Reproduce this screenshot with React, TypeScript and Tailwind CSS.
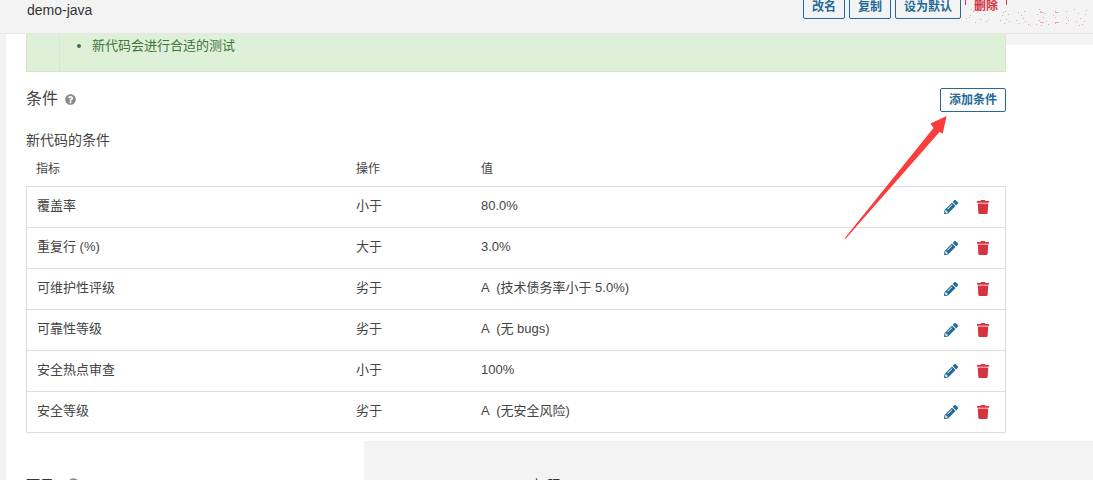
import { FaPencilAlt, FaQuestionCircle, FaTrash } from "react-icons/fa";

const rows = [
  { name: "覆盖率", op: "小于", value: "80.0%" },
  { name: "重复行 (%)", op: "大于", value: "3.0%" },
  { name: "可维护性评级", op: "劣于", value: "A  (技术债务率小于 5.0%)" },
  { name: "可靠性等级", op: "劣于", value: "A  (无 bugs)" },
  { name: "安全热点审查", op: "小于", value: "100%" },
  { name: "安全等级", op: "劣于", value: "A  (无安全风险)" },
];

// faint watermark specks over the header, in page pixels
const specks = [
  [966, 18], [969, 17], [970, 15], [973, 11], [975, 22], [977, 12], [971, 9], [980, 19], [984, 14], [986, 21], [988, 19],
  [1002, 15], [1005, 11], [1006, 19], [1008, 14], [1009, 21], [1004, 23], [1003, 12], [1000, 20],
  [1018, 12], [1021, 15], [1023, 18], [1025, 21], [1028, 24], [1016, 20], [1019, 23], [1024, 11], [1030, 25],
  [1037, 14], [1040, 11], [1043, 17], [1046, 21], [1048, 24], [1036, 24], [1039, 20], [1045, 13],
  [1039, 9], [1041, 25], [1055, 11], [1055, 17], [1055, 23], [1066, 11], [1066, 17], [1066, 23], [1053, 15], [1068, 20],
  [1074, 9], [1078, 13], [1080, 18], [1082, 24], [1086, 10], [1085, 14], [1076, 21], [1084, 21], [1079, 25],
];

function HeaderButton({ label, width }: { label: string; width: string }) {
  return (
    <button className={`${width} h-[24px] rounded-[2px] border border-[#236a97] bg-[#f3f3f3] text-[12px] font-semibold leading-[22px] text-[#236a97]`}>
      {label}
    </button>
  );
}

function Watermark() {
  return (
    <svg className="absolute left-[960px] top-[0px]" width="133" height="33" viewBox="960 0 133 33">
      {specks.map(([x, y]) => (
        <rect key={`${x}-${y}`} x={x} y={y} width="1" height="1" fill="#f2a5a5" />
      ))}
      <rect x="1040" y="12" width="4" height="1" fill="#f2a5a5" />
      <rect x="1040" y="22" width="4" height="1" fill="#f2a5a5" />
      <rect x="1055" y="12" width="4" height="1" fill="#f2a5a5" />
      <rect x="1055" y="22" width="4" height="1" fill="#f2a5a5" />
    </svg>
  );
}

function Arrow() {
  return (
    <svg className="absolute left-[840px] top-[112px]" width="112" height="130" viewBox="840 112 112 130">
      <path d="M946.6 116 L930.5 123.5 L933.5 128 L844.8 238 L845.6 238.8 L939.5 132 L942.8 133.5 Z" fill="#fb3c3c" />
    </svg>
  );
}

export default function App() {
  return (
    <div className="relative w-[1093px] h-[480px] overflow-hidden bg-white font-['Liberation_Sans','Noto_Sans_CJK_SC',sans-serif] text-[13px] text-[#444]">
      <header className="flex h-[34px] items-end justify-between overflow-hidden border-b border-[#e6e6e6] bg-[#f3f3f3] pb-[14px] pl-[27px] pr-[86px]">
        <h1 className="text-[14px] leading-[20px] mb-[-1px] text-[#333]">demo-java</h1>
        <div className="flex gap-[4px] items-end">
          <HeaderButton label="改名" width="w-[42px]" />
          <HeaderButton label="复制" width="w-[42px]" />
          <HeaderButton label="设为默认" width="w-[66px]" />
          <div className="mb-[14px] h-[5px] w-[42px] border-x border-[#d4333f]">
            <div className="h-[11px] overflow-hidden text-center text-[12px] font-semibold leading-[13px] text-[#d4333f]">删除</div>
          </div>
        </div>
      </header>

      <div className="flex h-[446px]">
        <div className="w-[6px] shrink-0 bg-[#f3f3f3]" />
        <div className="flex-1 flex flex-col">
          <main className="w-[1000px] pl-[20px]">
            <div className="flex h-[38px] border border-t-0 border-[#d6e9c6] bg-[#dff0d8] text-[#3c763d]">
              <div className="w-[33px] border-r border-[#d6e9c6]" />
              <ul className="list-disc pl-[32px] text-[13px] leading-[23px]">
                <li>新代码会进行合适的测试</li>
              </ul>
            </div>

            <div className="flex items-start justify-between mt-[16px] h-[24px]">
              <h2 className="flex items-center gap-[7px] pt-[1px] text-[16px] leading-[20px] text-[#444]">
                条件
                <FaQuestionCircle className="text-[11px] text-[#8a8a8a]" />
              </h2>
              <button className="h-[24px] w-[66px] rounded-[2px] border border-[#236a97] text-[12px] font-semibold text-[#236a97]">
                添加条件
              </button>
            </div>

            <h3 className="mt-[19px] text-[14px] leading-[18px]">新代码的条件</h3>

            <div className="flex h-[37px] items-center pl-[10px] pt-[2px] text-[12px]">
              <span className="w-[320px]">指标</span>
              <span className="w-[125px]">操作</span>
              <span>值</span>
            </div>

            <div className="border border-[#ddd] border-b-0">
              {rows.map((row) => (
                <div key={row.name} className="flex h-[41px] items-center border-b border-[#ddd] pb-[2px] pl-[10px] pr-[15px]">
                  <span className="w-[319px]">{row.name}</span>
                  <span className="w-[125px]">{row.op}</span>
                  <span className="flex-1 whitespace-pre">{row.value}</span>
                  <FaPencilAlt className="mt-[2px] mr-[18px] text-[14px] text-[#236a97]" />
                  <FaTrash className="mt-[2px] text-[14px] text-[#d4333f]" />
                </div>
              ))}
            </div>
          </main>

          <div className="flex flex-1 mt-[8px]">
            <div className="w-[358px] flex gap-[14px] pl-[20px] pt-[34px] text-[14px] leading-[20px] text-[#333]">
              项目
              <FaQuestionCircle className="mt-[3px] text-[11px] text-[#8a8a8a]" />
            </div>
            <div className="flex-1 bg-[#f3f3f3] pl-[169px] pt-[34px] text-[14px] leading-[20px] text-[#333]">权限</div>
          </div>
        </div>
      </div>

      <div className="absolute left-[1006px] top-[34px] h-[11px] w-[87px] bg-[#f3f3f3]" />
      <Watermark />
      <Arrow />
    </div>
  );
}
